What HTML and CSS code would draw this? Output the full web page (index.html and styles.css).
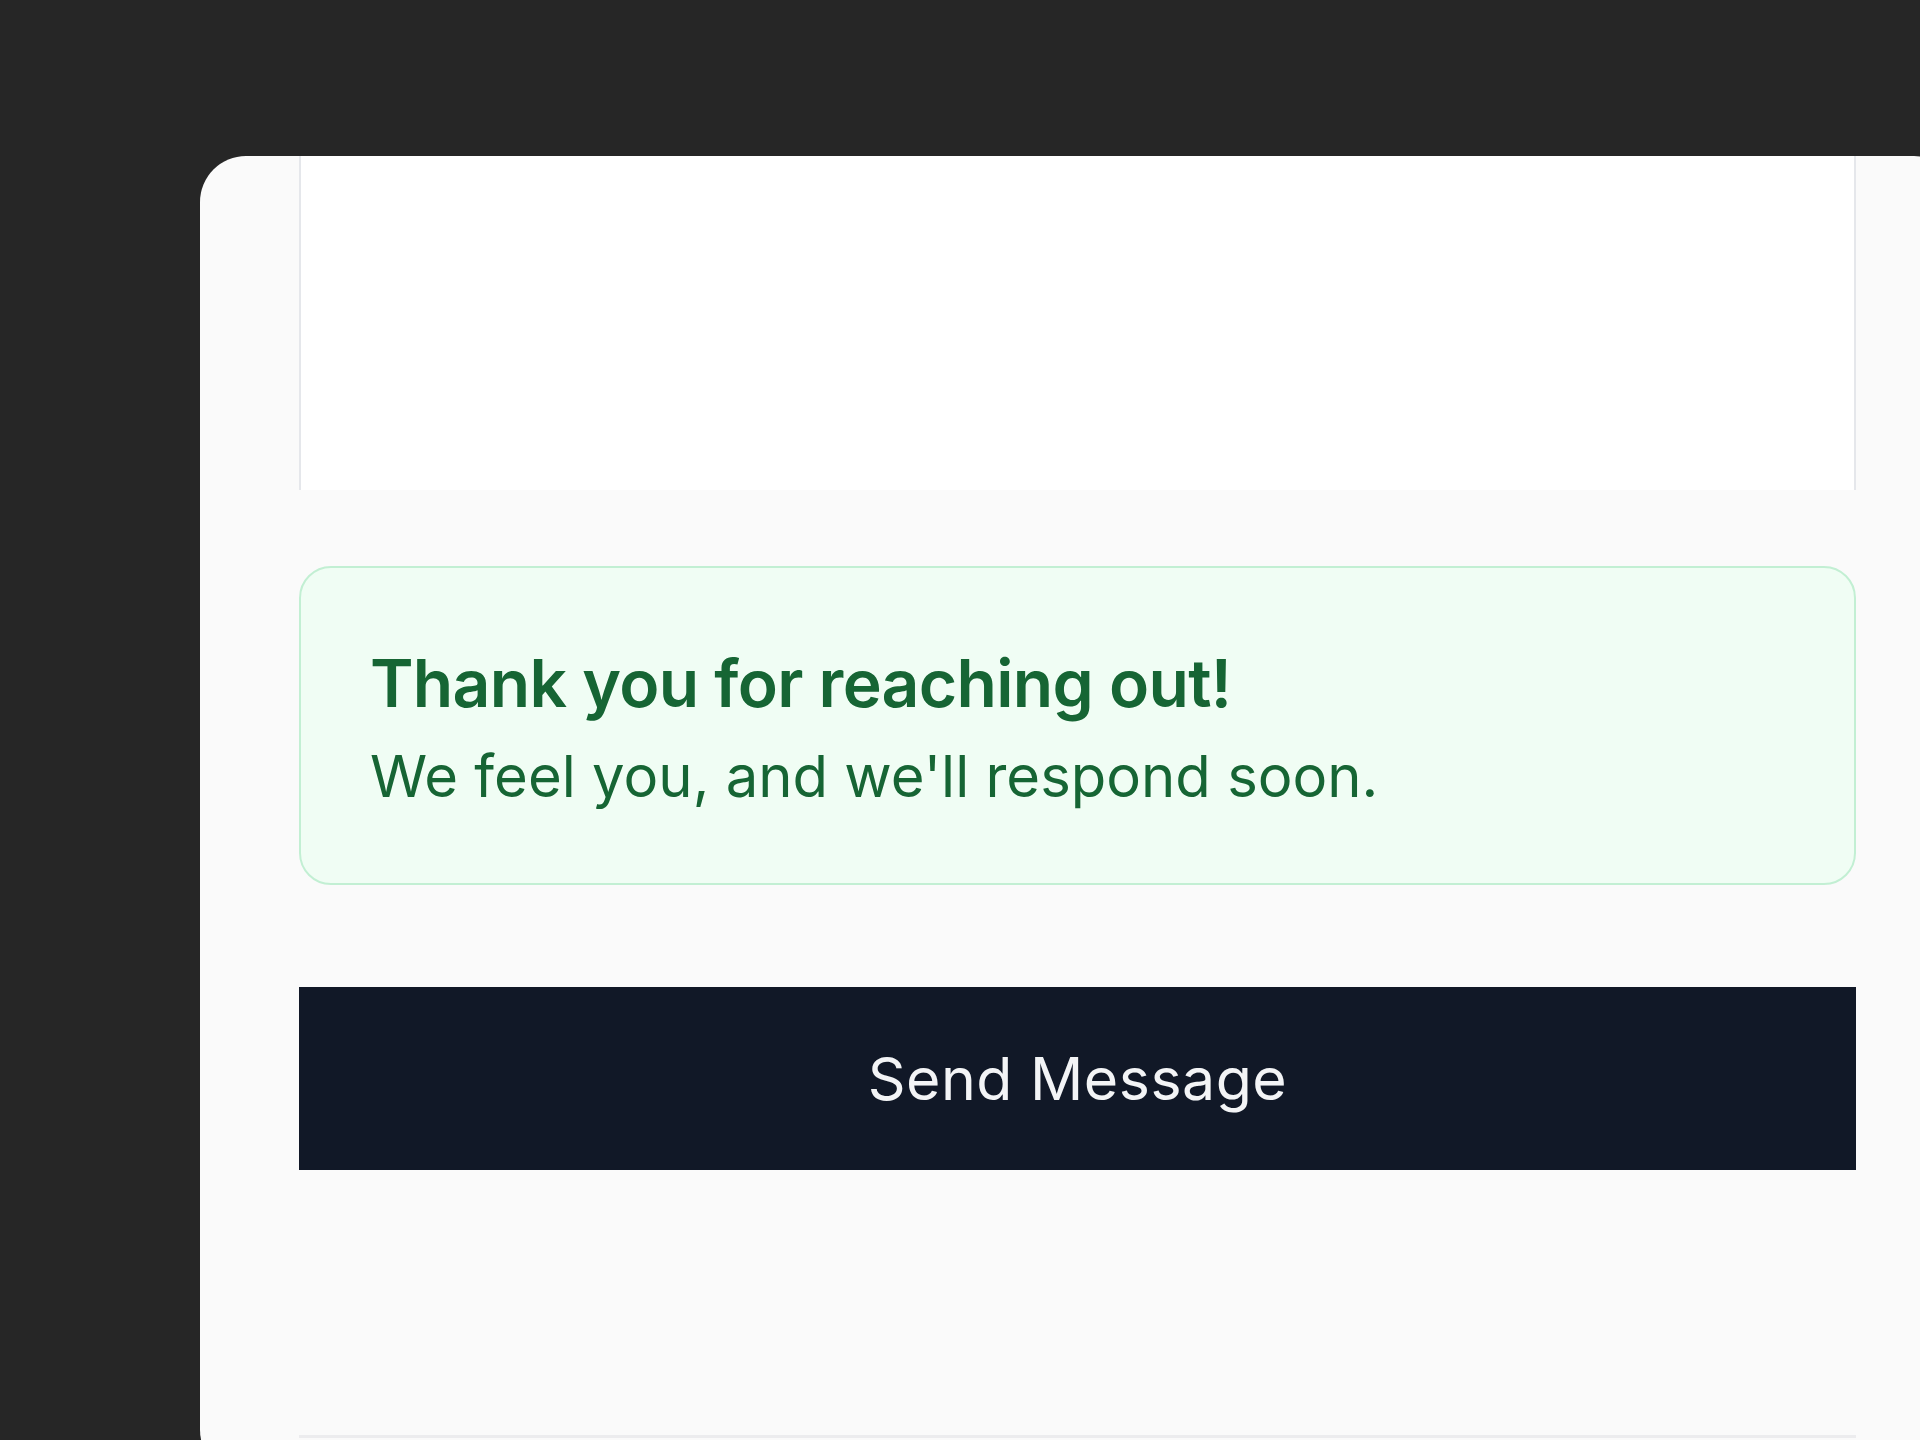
FILE: index.html
```html
<!DOCTYPE html>
<html lang="en">
<head>
<meta charset="utf-8">
<title>Contact</title>
<link rel="stylesheet" href="styles.css">
</head>
<body>
<div class="card">
  <div class="content">
    <div class="textarea"></div>
    <div class="notice">
      <h2 class="notice-title">Thank you for reaching out!</h2>
      <p class="notice-text">We feel you, and we'll respond soon.</p>
    </div>
    <button class="send" type="button">Send Message</button>
    <div class="next"></div>
  </div>
</div>
</body>
</html>
```

FILE: styles.css
```css
html, body {
  margin: 0;
  padding: 0;
}
body {
  background: #262626;
  width: 1920px;
  height: 1440px;
  overflow: hidden;
  padding: 156px 0 0 200px;
  box-sizing: border-box;
  font-family: Inter, "Noto Sans", sans-serif;
}
.card {
  width: 1760px;
  height: 1320px;
  background: #fafafa;
  border-radius: 46px;
  overflow: hidden;
}
.content {
  width: 1557px;
  margin-left: 99px;
  display: flex;
  flex-direction: column;
}
.textarea {
  height: 334px;
  background: #ffffff;
  border-left: 2px solid #e5e7eb;
  border-right: 2px solid #e5e7eb;
  box-sizing: border-box;
}
.notice {
  margin-top: 76px;
  height: 319px;
  box-sizing: border-box;
  background: #f0fdf4;
  border: 2px solid #c2efd3;
  border-radius: 32px;
  padding: 73px 60px 0 69px;
  color: #166534;
}
.notice-title {
  margin: 0;
  font-size: 66px;
  line-height: 84px;
  font-weight: 600;
  letter-spacing: -0.7px;
}
.notice-text {
  margin: 12px 0 0;
  font-size: 58px;
  line-height: 78px;
  font-weight: 400;
}
.send {
  margin-top: 102px;
  height: 183px;
  width: 100%;
  border: none;
  border-radius: 0;
  background: #111827;
  color: #f3f4f6;
  font-family: Inter, "Noto Sans", sans-serif;
  font-size: 59px;
  font-weight: 400;
  letter-spacing: 0.5px;
  padding: 0;
}
.next {
  margin-top: 265px;
  height: 10px;
  border-top: 3px solid #ececee;
}
```
